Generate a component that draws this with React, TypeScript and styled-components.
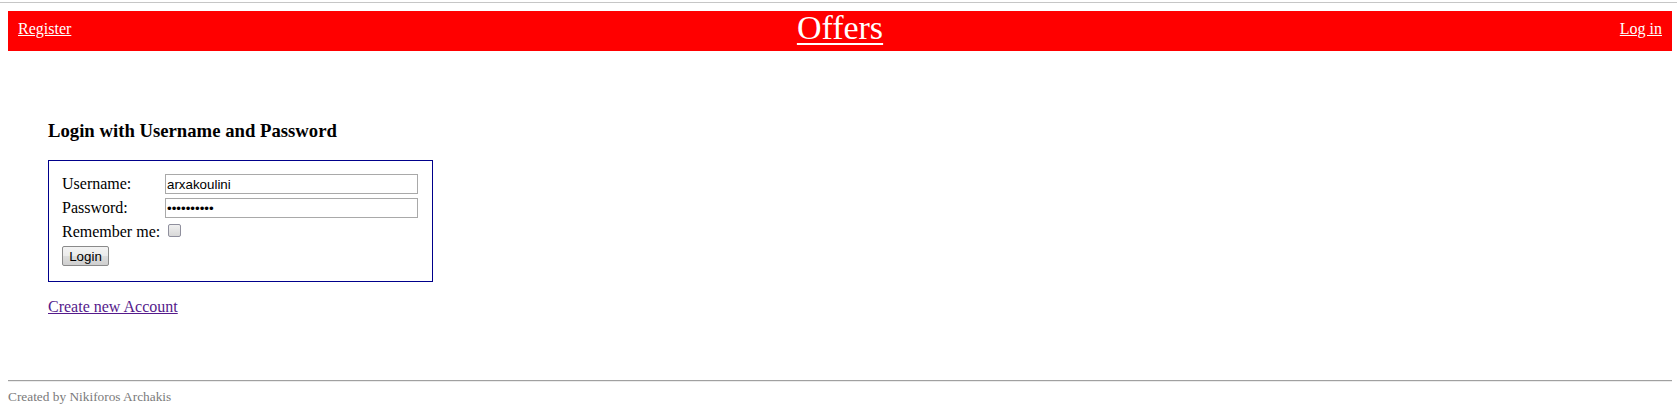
import React from "react";
import styled, { createGlobalStyle } from "styled-components";

const Global = createGlobalStyle`
  html, body { margin: 0; padding: 0; background: #fff; }
  body { font-family: "Liberation Serif", "Times New Roman", serif; font-size: 16px; color: #000; }
`;

const TopRule = styled.div`
  height: 1px;
  margin-top: 2px;
  background: #c6c6c6;
`;

const Page = styled.div`
  padding: 8px 5px 0 8px;
`;

const Header = styled.header`
  height: 40px;
  background: #ff0000;
  display: grid;
  grid-template-columns: 1fr auto 1fr;
  align-items: start;
  padding: 0 10px;
`;

const NavLink = styled.a<{ $align?: "left" | "right" }>`
  margin-top: 9px;
  font-size: 16px;
  line-height: 18px;
  color: #fff;
  text-decoration: underline;
  justify-self: ${(p) => (p.$align === "right" ? "end" : "start")};
`;

const Title = styled.a`
  font-size: 34px;
  line-height: 34px;
  color: #fff;
  text-decoration: underline;
  text-decoration-thickness: 2px;
  text-underline-offset: 4px;
`;

const Main = styled.main`
  padding: 50px 0 0 40px;
`;

const Heading = styled.h3`
  font-size: 18.72px;
  font-weight: bold;
  margin: 18.72px 0;
`;

const Box = styled.form`
  width: 356px;
  border: 1px solid #00008b;
  padding: 11px 14px 13px 13px;
  display: grid;
  grid-template-columns: 103px 253px;
  grid-auto-rows: 24px;
  align-items: center;
`;

const Label = styled.label`
  font-size: 16px;
  line-height: 18px;
`;

const TextInput = styled.input`
  box-sizing: border-box;
  width: 253px;
  height: 20px;
  margin: 0;
  border: 1px solid #a9a9a9;
  padding: 0 1px;
  font-family: "Liberation Sans", Arial, sans-serif;
  font-size: 13.33px;
  color: #000;
  outline: none;
`;

const Check = styled.input`
  width: 13px;
  height: 13px;
  margin: 0 0 0 3px;
  appearance: none;
  border: 1px solid #8f8f9d;
  border-radius: 2px;
  background: linear-gradient(#f0f0f0, #d8d8d8);
  box-sizing: border-box;
`;

const Button = styled.button`
  grid-column: 1 / 2;
  justify-self: start;
  box-sizing: border-box;
  width: 47px;
  height: 20px;
  padding: 0;
  font-family: "Liberation Sans", Arial, sans-serif;
  font-size: 13.33px;
  color: #000;
  border: 1px solid #8a8a8a;
  border-radius: 2px;
  background: linear-gradient(#f3f3f3 0%, #ebebeb 50%, #dddddd 51%, #cfcfcf 100%);
`;

const CreateLink = styled.a`
  display: block;
  margin: 16px 0 0;
  font-size: 16px;
  line-height: 18px;
  color: #551a8b;
  text-decoration: underline;
`;

const Footer = styled.footer`
  margin-top: 64px;
`;

const Rule = styled.hr`
  margin: 0;
  border: 0;
  border-top: 1px solid #a0a0a0;
  border-bottom: 1px solid #ececec;
`;

const Credit = styled.p`
  margin: 7px 0 0;
  font-size: 13.33px;
  line-height: 16px;
  color: #7a7a7a;
`;

export default function App() {
  return (
    <>
      <Global />
      <TopRule />
      <Page>
        <Header>
          <NavLink href="#">Register</NavLink>
          <Title href="#">Offers</Title>
          <NavLink href="#" $align="right">Log in</NavLink>
        </Header>
        <Main>
          <Heading>Login with Username and Password</Heading>
          <Box onSubmit={(e) => e.preventDefault()}>
            <Label htmlFor="u">Username:</Label>
            <TextInput id="u" type="text" defaultValue="arxakoulini" />
            <Label htmlFor="p">Password:</Label>
            <TextInput id="p" type="password" defaultValue="arxakoulin" />
            <Label htmlFor="r">Remember me:</Label>
            <div>
              <Check id="r" type="checkbox" />
            </div>
            <Button type="submit">Login</Button>
          </Box>
          <CreateLink href="#">Create new Account</CreateLink>
        </Main>
        <Footer>
          <Rule />
          <Credit>Created by Nikiforos Archakis</Credit>
        </Footer>
      </Page>
    </>
  );
}
